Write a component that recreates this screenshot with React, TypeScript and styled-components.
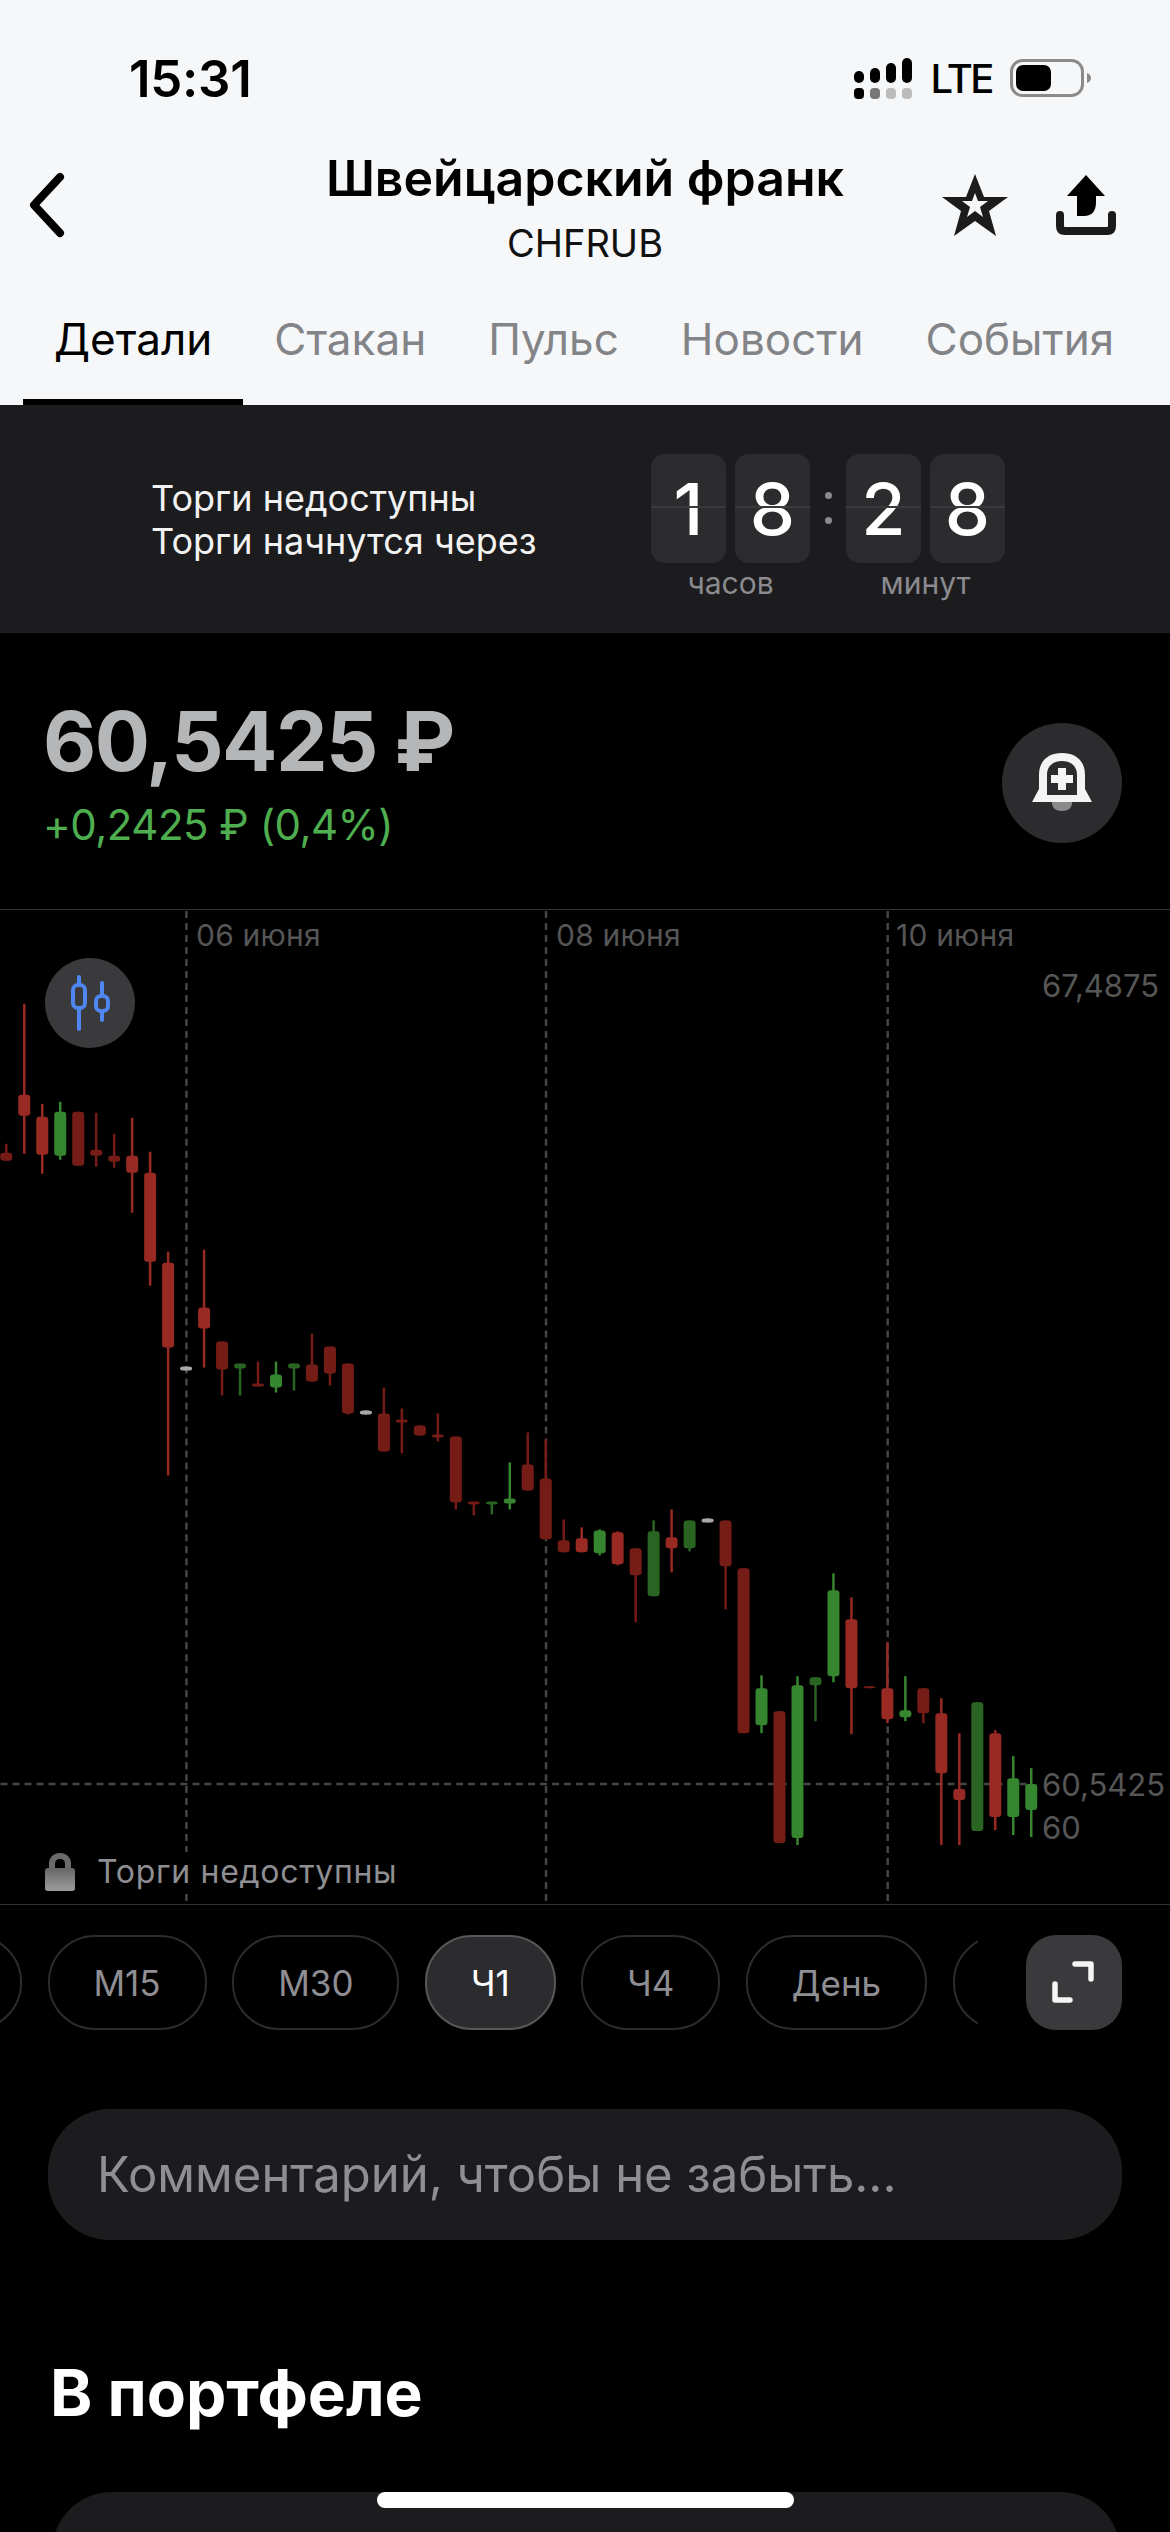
import styled, { createGlobalStyle } from "styled-components";

const GlobalStyle = createGlobalStyle`
  html, body {
    margin: 0;
    padding: 0;
    background: #000;
  }
  * {
    box-sizing: border-box;
  }
`;

// wick top, wick bottom, body top, body bottom, tone
// r/g = dark red/green, R/G = bright, n = grey dash
type Candle = [number, number, number, number, string];

const CANDLES: Candle[] = [
  [1143, 1160, 1152, 1160, "r"],
  [1003, 1153, 1094, 1115, "R"],
  [1103, 1173, 1116, 1154, "R"],
  [1101, 1159, 1111, 1155, "G"],
  [1111, 1165, 1111, 1165, "r"],
  [1112, 1166, 1149, 1155, "r"],
  [1133, 1167, 1155, 1161, "r"],
  [1117, 1212, 1155, 1172, "R"],
  [1151, 1285, 1172, 1261, "R"],
  [1251, 1475, 1262, 1347, "R"],
  [1366, 1370, 1366, 1370, "n"],
  [1249, 1367, 1307, 1328, "R"],
  [1341, 1395, 1341, 1369, "r"],
  [1363, 1395, 1363, 1368, "g"],
  [1361, 1386, 1383, 1386, "r"],
  [1361, 1392, 1374, 1387, "G"],
  [1363, 1390, 1363, 1368, "g"],
  [1333, 1381, 1364, 1381, "r"],
  [1346, 1385, 1346, 1373, "r"],
  [1363, 1414, 1363, 1413, "r"],
  [1410, 1414, 1410, 1414, "n"],
  [1387, 1451, 1413, 1451, "r"],
  [1408, 1453, 1419, 1422, "r"],
  [1425, 1435, 1425, 1435, "r"],
  [1413, 1441, 1434, 1437, "r"],
  [1436, 1509, 1436, 1502, "r"],
  [1502, 1515, 1501, 1504, "r"],
  [1502, 1514, 1501, 1504, "g"],
  [1462, 1509, 1498, 1503, "G"],
  [1432, 1490, 1464, 1490, "r"],
  [1439, 1539, 1478, 1539, "r"],
  [1519, 1552, 1540, 1552, "r"],
  [1527, 1552, 1538, 1552, "R"],
  [1529, 1555, 1530, 1553, "G"],
  [1531, 1565, 1532, 1564, "R"],
  [1548, 1622, 1548, 1575, "r"],
  [1520, 1596, 1531, 1596, "g"],
  [1509, 1572, 1537, 1548, "R"],
  [1520, 1551, 1520, 1548, "g"],
  [1518, 1522, 1518, 1522, "n"],
  [1520, 1609, 1520, 1566, "r"],
  [1568, 1733, 1568, 1733, "r"],
  [1675, 1733, 1688, 1725, "G"],
  [1711, 1843, 1711, 1843, "r"],
  [1676, 1845, 1685, 1838, "G"],
  [1677, 1721, 1677, 1685, "g"],
  [1573, 1682, 1590, 1676, "G"],
  [1597, 1734, 1619, 1688, "R"],
  [1686, 1688, 1686, 1688, "r"],
  [1642, 1723, 1688, 1719, "R"],
  [1676, 1721, 1710, 1717, "G"],
  [1688, 1723, 1688, 1713, "r"],
  [1698, 1845, 1713, 1773, "R"],
  [1733, 1845, 1789, 1800, "R"],
  [1702, 1831, 1702, 1831, "g"],
  [1730, 1830, 1733, 1817, "R"],
  [1756, 1835, 1778, 1817, "G"],
  [1768, 1837, 1784, 1810, "G"],
];

const TONES: Record<string, string> = {
  r: "#761c17",
  R: "#982a23",
  g: "#2a6423",
  G: "#36852f",
  n: "#a8a8a8",
};

const TABS = ["Детали", "Стакан", "Пульс", "Новости", "События"];
const PERIODS = ["М15", "М30", "Ч1", "Ч4", "День"];

const ChartLines = () => (
  <ChartSvg viewBox="0 909 1170 995">
    <g stroke="#454545" strokeWidth="2.5" strokeDasharray="7 5">
      <line x1="186" y1="910" x2="186" y2="1904" />
      <line x1="546" y1="910" x2="546" y2="1904" />
      <line x1="888" y1="910" x2="888" y2="1904" />
      <line x1="0" y1="1784" x2="1030" y2="1784" />
    </g>
    {CANDLES.map(([wickTop, wickBottom, bodyTop, bodyBottom, tone], i) => {
      const x = 5.7 + 18 * i;
      return (
        <g key={i} fill={TONES[tone]}>
          <rect x={x - 1.25} y={wickTop} width="2.5" height={wickBottom - wickTop} />
          <rect x={x - 6} y={bodyTop} width="12" height={bodyBottom - bodyTop} rx="3" />
        </g>
      );
    })}
  </ChartSvg>
);

const App = () => {
  return (
    <Page>
      <GlobalStyle />
      <LightHeader>
        <StatusBar>
          <Clock>15:31</Clock>
          <StatusIcons>
            <svg width="58" height="41" viewBox="0 0 58 41">
              <rect x="0" y="13" width="10" height="12" rx="5" fill="#000" />
              <rect x="16" y="10" width="10" height="15" rx="5" fill="#000" />
              <rect x="32" y="5" width="10" height="20" rx="5" fill="#000" />
              <rect x="48" y="0" width="10" height="25" rx="5" fill="#000" />
              <rect x="0" y="30" width="10" height="11" rx="4" fill="#000" />
              <rect x="16" y="30" width="10" height="11" rx="4" fill="#777" />
              <rect x="32" y="30" width="10" height="11" rx="4" fill="#bbb" />
              <rect x="48" y="30" width="10" height="11" rx="4" fill="#bbb" />
            </svg>
            <NetworkLabel>LTE</NetworkLabel>
            <svg width="81" height="38" viewBox="0 0 81 38">
              <rect x="1.5" y="1.5" width="71" height="35" rx="11" fill="none" stroke="#8a8a8a" strokeWidth="3" />
              <rect x="6" y="6" width="35" height="26" rx="7" fill="#000" />
              <path d="M77 14 C80 15 81 17 81 19 C81 21 80 23 77 24 Z" fill="#8a8a8a" />
            </svg>
          </StatusIcons>
        </StatusBar>
        <NavBar>
          <BackSlot>
            <svg width="40" height="66" viewBox="0 0 40 66">
              <path d="M32 5 L6 33 L32 61" fill="none" stroke="#000" strokeWidth="8" strokeLinecap="round" strokeLinejoin="round" />
            </svg>
          </BackSlot>
          <TitleBlock>
            <Title>Швейцарский франк</Title>
            <Ticker>CHFRUB</Ticker>
          </TitleBlock>
          <NavActions>
            <svg width="66" height="62" viewBox="0 0 66 62">
              <path
                fillRule="evenodd"
                fill="#1c1c1c"
                d="M33 0 L42 23 L66 23 L47 37 L54 62 L33 47 L12 62 L19 37 L0 23 L24 23 Z M33 19 L30 27 L20 27 L28 33 L25 43 L33 37 L41 43 L38 33 L46 27 L36 27 Z"
              />
            </svg>
            <svg width="60" height="60" viewBox="0 0 60 60">
              <path d="M30 0 L49 21 H40 V27 C40 36 36 41 28 41 H21 V21 H11 Z" fill="#000" />
              <path d="M4 40 V51 Q4 56 9 56 H51 Q56 56 56 51 V40" fill="none" stroke="#1a1a1a" strokeWidth="8" strokeLinecap="round" />
            </svg>
          </NavActions>
        </NavBar>
        <Tabs>
          {TABS.map((tab, i) => (
            <Tab key={tab} $active={i === 0}>
              {tab}
            </Tab>
          ))}
        </Tabs>
      </LightHeader>

      <Banner>
        <BannerText>
          <div>Торги недоступны</div>
          <div>Торги начнутся через</div>
        </BannerText>
        <Countdown>
          <TimeUnit>
            <FlipPair>
              <FlipCard>1</FlipCard>
              <FlipCard>8</FlipCard>
            </FlipPair>
            <UnitLabel>часов</UnitLabel>
          </TimeUnit>
          <Colon />
          <TimeUnit>
            <FlipPair>
              <FlipCard>2</FlipCard>
              <FlipCard>8</FlipCard>
            </FlipPair>
            <UnitLabel>минут</UnitLabel>
          </TimeUnit>
        </Countdown>
      </Banner>

      <PriceRow>
        <div>
          <Price>60,5425 ₽</Price>
          <PriceChange>+0,2425 ₽ (0,4%)</PriceChange>
        </div>
        <BellButton>
          <svg width="60" height="60" viewBox="0 0 60 60">
            <path d="M20 49 H40 V50 C40 55 36 58 30 58 C24 58 20 55 20 50 Z" fill="#8a8a8c" />
            <path
              fillRule="evenodd"
              fill="#f4f4f4"
              d="M0 49 L7 36 V22 C7 8 16 0 30 0 C44 0 53 8 53 22 V36 L60 49 Z M15 42 H45 V22 C45 13 39 8 30 8 C21 8 15 13 15 22 Z"
            />
            <path d="M26 15 H34 V22 H41 V30 H34 V37 H26 V30 H19 V22 H26 Z" fill="#f4f4f4" />
          </svg>
        </BellButton>
      </PriceRow>

      <Chart>
        <ChartLines />
        <DateLabel $left={196}>06 июня</DateLabel>
        <DateLabel $left={556}>08 июня</DateLabel>
        <DateLabel $left={896}>10 июня</DateLabel>
        <AxisLabel $top={985}>67,4875</AxisLabel>
        <AxisLabel $top={1784}>60,5425</AxisLabel>
        <AxisLabel $top={1827}>60</AxisLabel>
        <ModeButton>
          <svg width="40" height="56" viewBox="0 0 40 56">
            <g fill="none" stroke="#4f86f0" strokeWidth="4" strokeLinecap="round">
              <path d="M9 2 V10 M9 34 V54" />
              <rect x="3" y="10" width="12" height="23" rx="5" />
              <path d="M32 8 V21 M32 37 V45" />
              <rect x="26" y="21" width="12" height="15" rx="5" />
            </g>
          </svg>
        </ModeButton>
        <LockNote>
          <svg width="30" height="38" viewBox="0 0 30 38">
            <defs>
              <linearGradient id="lockFill" x1="0" y1="0" x2="0" y2="1">
                <stop offset="0" stopColor="#666" />
                <stop offset="1" stopColor="#9c9c9c" />
              </linearGradient>
            </defs>
            <path d="M7 16 V11 C7 6 10 3 15 3 C20 3 23 6 23 11 V16" fill="none" stroke="#6a6a6a" strokeWidth="6" />
            <rect x="0" y="15" width="30" height="23" rx="3" fill="url(#lockFill)" />
          </svg>
          <span>Торги недоступны</span>
        </LockNote>
      </Chart>

      <PeriodRow>
        <PeriodStrip>
          <StubPill $width={100} $shift={-78} />
          {PERIODS.map((period) => (
            <Pill key={period} $active={period === "Ч1"}>
              {period}
            </Pill>
          ))}
          <StubPill $width={176} $shift={0} />
        </PeriodStrip>
        <ExpandButton>
          <svg width="44" height="44" viewBox="0 0 44 44">
            <path d="M23 3 H39 V18 M3 23 V39 H18" fill="none" stroke="#f5f5f5" strokeWidth="5.5" strokeLinecap="round" strokeLinejoin="round" />
          </svg>
        </ExpandButton>
      </PeriodRow>

      <CommentBox>Комментарий, чтобы не забыть...</CommentBox>
      <SectionTitle>В портфеле</SectionTitle>
      <PortfolioCard />
      <HomeIndicator />
    </Page>
  );
};

export default App;

const Page = styled.div`
  position: relative;
  width: 1170px;
  height: 2532px;
  overflow: hidden;
  background: #000;
  font-family: Inter, "Noto Sans", sans-serif;
  color: #fff;
`;

const LightHeader = styled.header`
  height: 405px;
  background: #f6f7f9;
  color: #000;
`;

const StatusBar = styled.div`
  height: 140px;
  padding: 16px 79px 0 129px;
  display: flex;
  align-items: center;
  justify-content: space-between;
`;

const Clock = styled.div`
  font-size: 51px;
  font-weight: 600;
  letter-spacing: -0.3px;
`;

const StatusIcons = styled.div`
  display: flex;
  align-items: center;
  gap: 18px;
`;

const NetworkLabel = styled.div`
  font-size: 40px;
  font-weight: 500;
  letter-spacing: -2.5px;
`;

const NavBar = styled.div`
  height: 130px;
  display: grid;
  grid-template-columns: 1fr auto 1fr;
  align-items: center;
`;

const BackSlot = styled.div`
  padding-left: 28px;
  display: flex;
`;

const TitleBlock = styled.div`
  text-align: center;
`;

const Title = styled.div`
  font-size: 50px;
  font-weight: 600;
  line-height: 76px;
`;

const Ticker = styled.div`
  font-size: 38px;
  line-height: 54px;
  color: #111;
`;

const NavActions = styled.div`
  display: flex;
  justify-content: flex-end;
  align-items: center;
  gap: 48px;
  padding-right: 54px;
`;

const Tabs = styled.nav`
  height: 135px;
  padding-left: 23px;
  display: flex;
`;

const Tab = styled.div<{ $active?: boolean }>`
  height: 135px;
  padding: 9px 31px 0;
  display: flex;
  align-items: center;
  font-size: 44px;
  color: ${(p) => (p.$active ? "#000" : "#838487")};
  border-bottom: 6px solid ${(p) => (p.$active ? "#000" : "transparent")};
`;

const Banner = styled.section`
  height: 228px;
  padding: 49px 0 0 151px;
  display: flex;
  background: #1c1c1e;
`;

const BannerText = styled.div`
  width: 500px;
  padding-top: 23px;
  font-size: 36px;
  line-height: 43px;
  color: #f2f2f2;
`;

const Countdown = styled.div`
  display: flex;
`;

const TimeUnit = styled.div`
  display: flex;
  flex-direction: column;
  align-items: center;
`;

const FlipPair = styled.div`
  display: flex;
  gap: 9px;
`;

const FlipCard = styled.div`
  position: relative;
  width: 75px;
  height: 109px;
  display: flex;
  align-items: center;
  justify-content: center;
  border-radius: 14px;
  background: #2c2c2e;
  font-size: 72px;
  font-weight: 500;
  color: #fff;

  &::after {
    content: "";
    position: absolute;
    left: 0;
    right: 0;
    top: 52px;
    height: 2px;
    background: #3a3a3c;
  }
`;

const Colon = styled.div`
  position: relative;
  width: 36px;
  height: 109px;

  &::before,
  &::after {
    content: "";
    position: absolute;
    left: 15px;
    width: 7px;
    height: 7px;
    border-radius: 50%;
    background: #8a8a8c;
  }
  &::before {
    top: 38px;
  }
  &::after {
    top: 63px;
  }
`;

const UnitLabel = styled.div`
  margin-top: 2px;
  font-size: 30px;
  line-height: 36px;
  color: #8b8b8f;
`;

const PriceRow = styled.section`
  height: 276px;
  padding: 61px 48px 0 43px;
  display: flex;
  justify-content: space-between;
  align-items: flex-start;
`;

const Price = styled.div`
  font-size: 82px;
  font-weight: 700;
  line-height: 96px;
  letter-spacing: -1.6px;
  color: #b5b6b8;
`;

const PriceChange = styled.div`
  margin-top: 10px;
  font-size: 42px;
  line-height: 50px;
  letter-spacing: -0.5px;
  color: #4fae4f;
`;

const BellButton = styled.div`
  margin-top: 29px;
  width: 120px;
  height: 120px;
  border-radius: 50%;
  background: #2c2c2e;
  display: flex;
  align-items: center;
  justify-content: center;
`;

const Chart = styled.section`
  position: relative;
  height: 996px;
  border-top: 1px solid #333;
  border-bottom: 1px solid #333;
`;

const ChartSvg = styled.svg`
  display: block;
  width: 1170px;
  height: 994px;
`;

const DateLabel = styled.div<{ $left: number }>`
  position: absolute;
  left: ${(p) => p.$left}px;
  top: 6px;
  font-size: 30px;
  line-height: 38px;
  letter-spacing: 0.2px;
  color: #565656;
`;

// $top is the page y of the label's centre, the chart starts at 909
const AxisLabel = styled.div<{ $top: number }>`
  position: absolute;
  left: 1042px;
  top: ${(p) => p.$top - 909 - 19}px;
  font-size: 31px;
  line-height: 38px;
  color: #565656;
`;

const ModeButton = styled.div`
  position: absolute;
  left: 45px;
  top: 48px;
  width: 90px;
  height: 90px;
  border-radius: 50%;
  background: #3a3a3c;
  display: flex;
  align-items: center;
  justify-content: center;
`;

const LockNote = styled.div`
  position: absolute;
  left: 45px;
  top: 942px;
  display: flex;
  align-items: center;
  gap: 22px;
  background: #000;
  font-size: 32px;
  letter-spacing: 0.7px;
  color: #8e8e93;
`;

const PeriodRow = styled.div`
  padding-top: 30px;
  display: flex;
`;

const PeriodStrip = styled.div`
  width: 978px;
  height: 95px;
  display: flex;
  gap: 25.5px;
  overflow: hidden;
`;

const Pill = styled.div<{ $active?: boolean }>`
  flex-shrink: 0;
  height: 95px;
  padding: 0 44px;
  display: flex;
  align-items: center;
  border-radius: 47px;
  border: 2.5px solid ${(p) => (p.$active ? "#58585a" : "#2c2c2e")};
  background: ${(p) => (p.$active ? "#2c2c2e" : "transparent")};
  color: ${(p) => (p.$active ? "#fff" : "#8e8e93")};
  font-size: 35px;
`;

// pills that the strip's edges cut off, nothing of their label shows
const StubPill = styled.div<{ $width: number; $shift: number }>`
  flex-shrink: 0;
  width: ${(p) => p.$width}px;
  height: 95px;
  margin-left: ${(p) => p.$shift}px;
  border-radius: 47px;
  border: 2.5px solid #2c2c2e;
`;

const ExpandButton = styled.div`
  margin-left: 48px;
  width: 96px;
  height: 95px;
  border-radius: 30px;
  background: #3a3a3c;
  display: flex;
  align-items: center;
  justify-content: center;
`;

const CommentBox = styled.div`
  margin: 79px 48px 0;
  height: 131px;
  padding-left: 49px;
  display: flex;
  align-items: center;
  border-radius: 62px;
  background: #1c1c1e;
  font-size: 49px;
  color: #8e8e93;
`;

const SectionTitle = styled.h2`
  margin: 115px 0 0 50px;
  font-size: 64px;
  font-weight: 700;
  line-height: 76px;
`;

const PortfolioCard = styled.div`
  margin: 61px 50px 0 52px;
  height: 120px;
  border-radius: 62px;
  background: #1c1c1e;
`;

const HomeIndicator = styled.div`
  position: absolute;
  left: 377px;
  bottom: 24px;
  width: 417px;
  height: 16px;
  border-radius: 8px;
  background: #fff;
`;
